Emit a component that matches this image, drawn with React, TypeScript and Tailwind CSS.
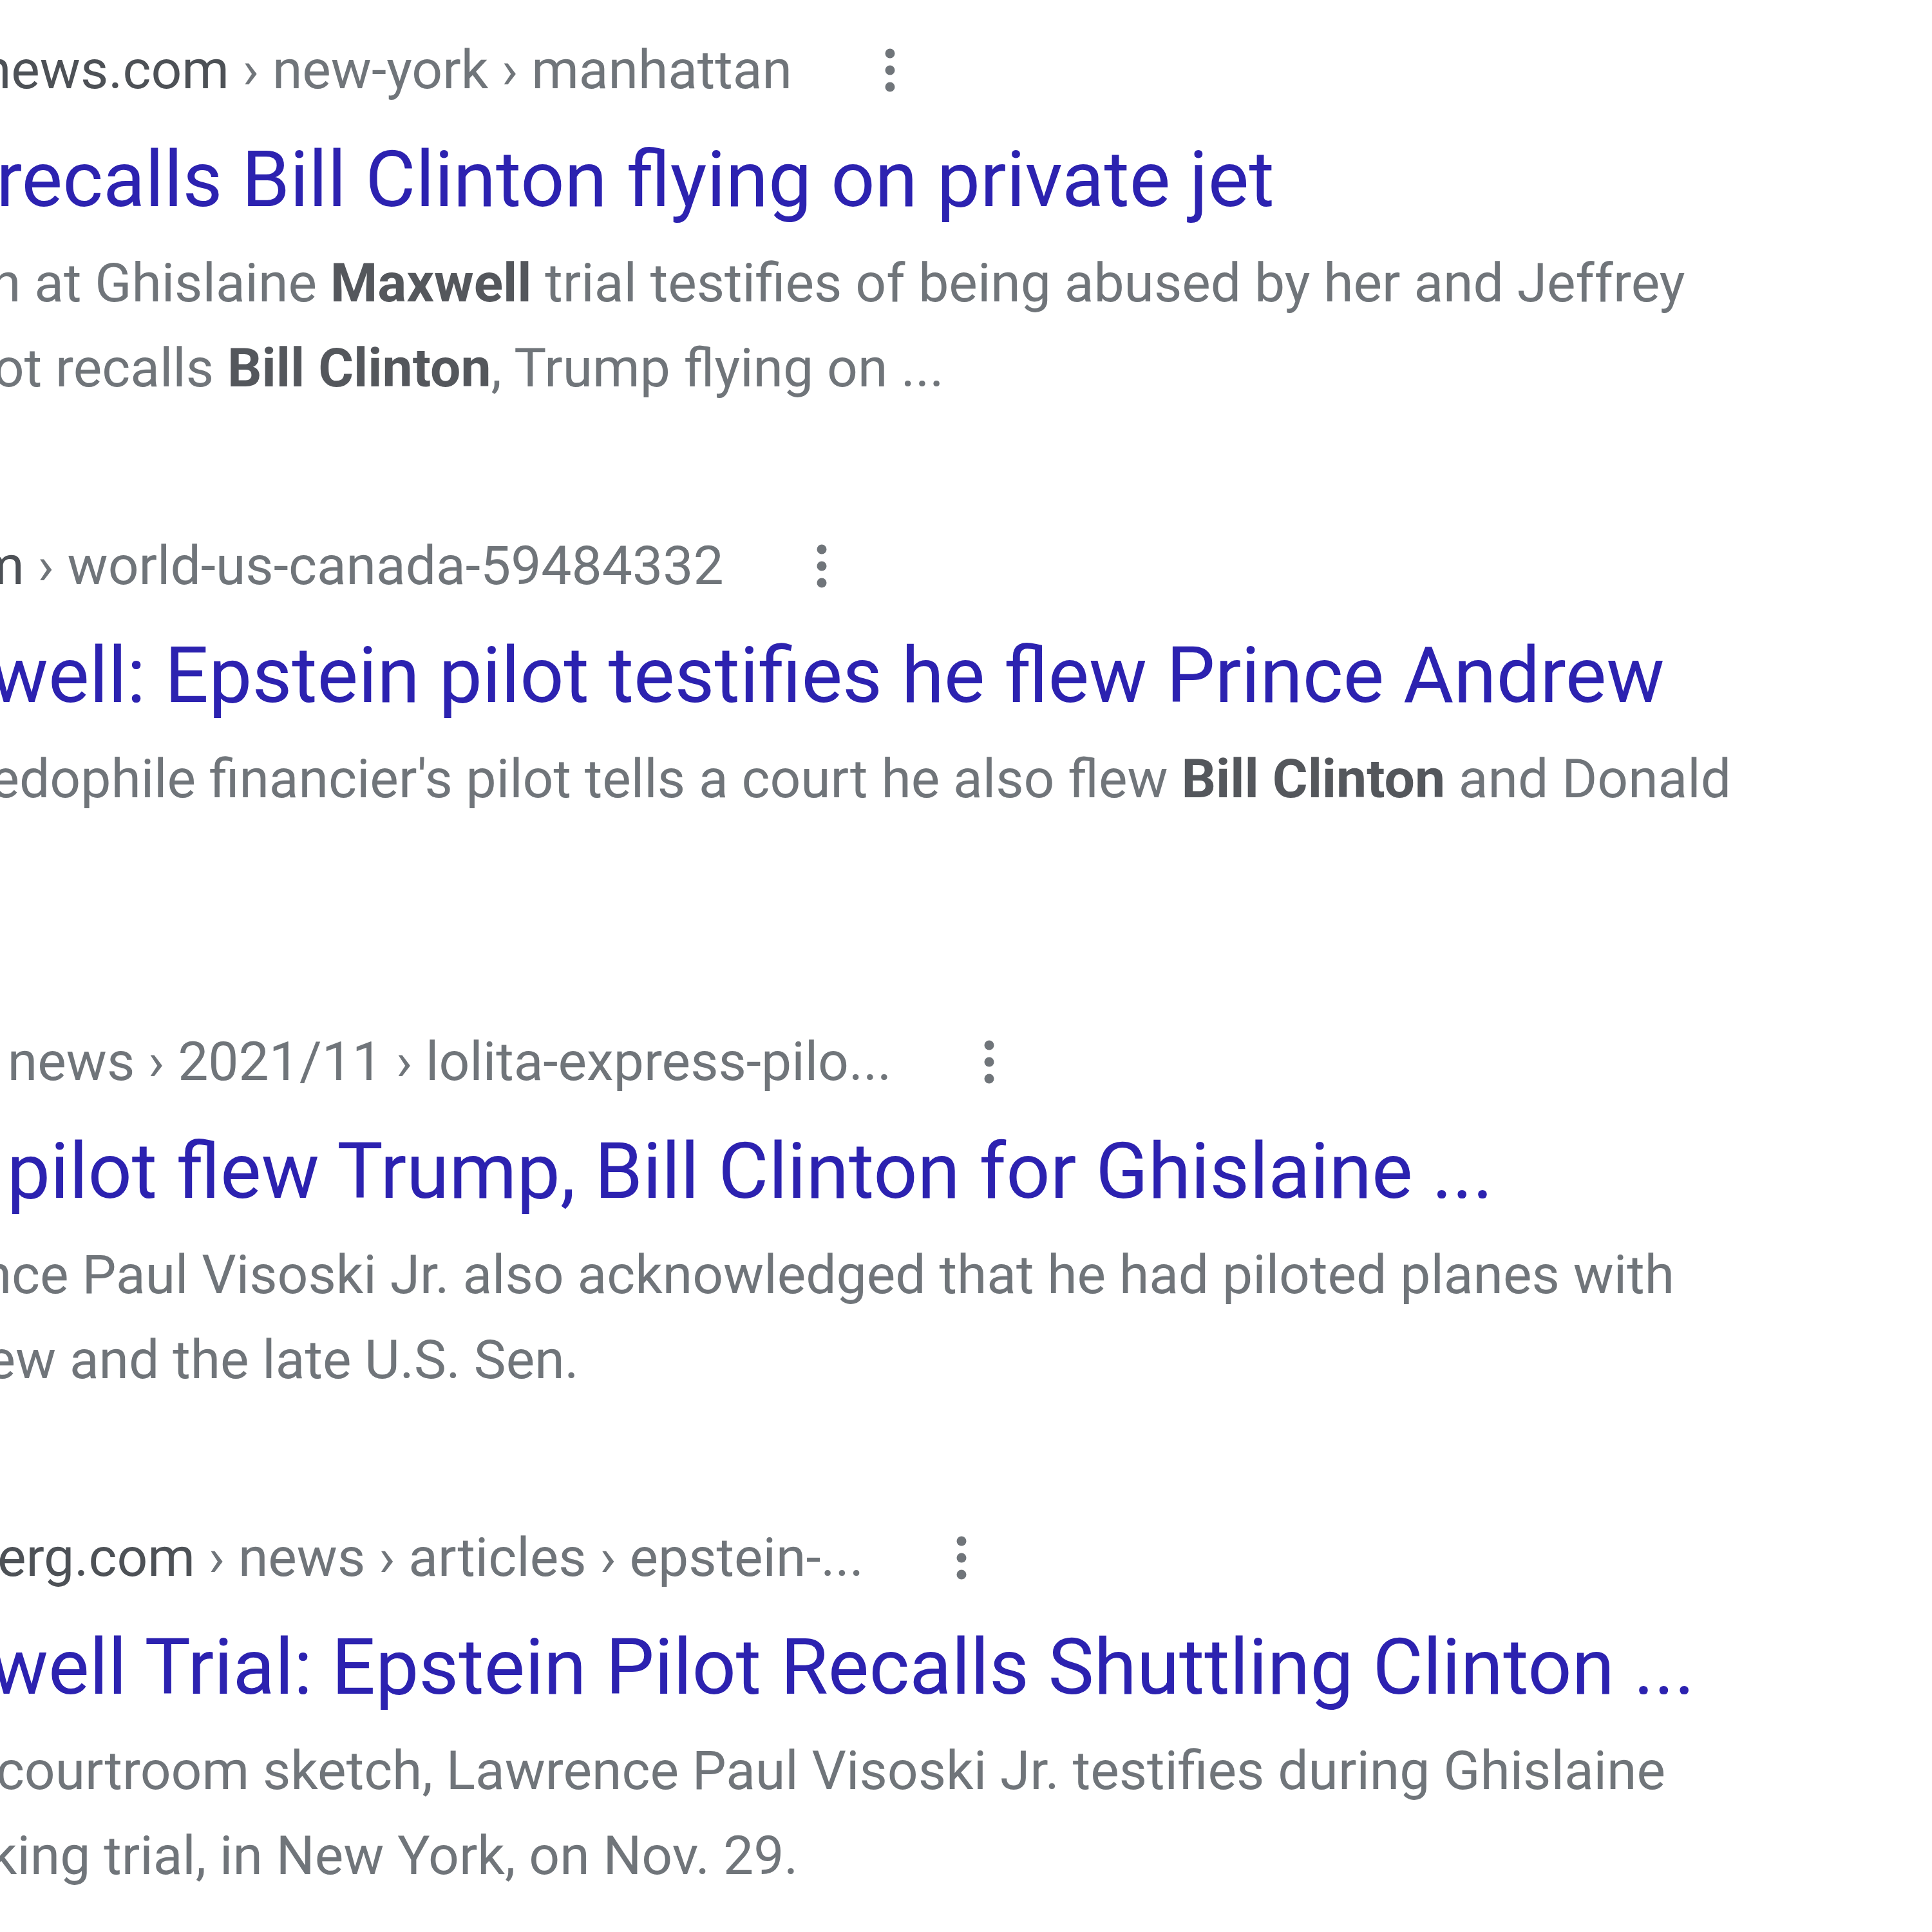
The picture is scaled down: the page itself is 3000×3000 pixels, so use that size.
import React from "react";

type Part = { t: string; b?: boolean };

type Result = {
  site: string;
  path: string;
  title: string;
  lines: Part[][];
};

const results: Result[] = [
  {
    site: "https://www.nydailynews.com",
    path: " › new-york › manhattan",
    title: "Epstein's pilot recalls Bill Clinton flying on private jet",
    lines: [
      [
        { t: "2 days ago — Woman at Ghislaine " },
        { t: "Maxwell", b: true },
        { t: " trial testifies of being abused by her and Jeffrey" },
      ],
      [
        { t: "Epstein. A former pilot recalls " },
        { t: "Bill Clinton", b: true },
        { t: ", Trump flying on ..." },
      ],
    ],
  },
  {
    site: "https://www.bbc.com",
    path: " › world-us-canada-59484332",
    title: "Ghislaine Maxwell: Epstein pilot testifies he flew Prince Andrew",
    lines: [
      [
        { t: "Dec 1, 2021 — The pedophile financier's pilot tells a court he also flew " },
        { t: "Bill Clinton", b: true },
        { t: " and Donald" },
      ],
    ],
  },
  {
    site: "https://nypost.com",
    path: " › news › 2021/11 › lolita-express-pilo...",
    title: "Lolita Express pilot flew Trump, Bill Clinton for Ghislaine ...",
    lines: [
      [{ t: "2 days ago — Lawrence Paul Visoski Jr. also acknowledged that he had piloted planes with" }],
      [{ t: "Britain's Prince Andrew and the late U.S. Sen." }],
    ],
  },
  {
    site: "https://www.bloomberg.com",
    path: " › news › articles › epstein-...",
    title: "Ghislaine Maxwell Trial: Epstein Pilot Recalls Shuttling Clinton ...",
    lines: [
      [{ t: "2 days ago — In this courtroom sketch, Lawrence Paul Visoski Jr. testifies during Ghislaine" }],
      [{ t: "Maxwell's sex trafficking trial, in New York, on Nov. 29." }],
    ],
  },
];

function Kebab() {
  return (
    <svg width="20" height="72" viewBox="0 0 20 72" className="ml-[142px] shrink-0">
      <circle cx="10" cy="10" r="7.5" fill="#70757a" />
      <circle cx="10" cy="36" r="7.5" fill="#70757a" />
      <circle cx="10" cy="62" r="7.5" fill="#70757a" />
    </svg>
  );
}

function ResultItem({ r }: { r: Result }) {
  return (
    <div className="flex flex-col">
      {/* breadcrumb */}
      <div className="flex items-center h-[132px] text-[84px] leading-[132px] whitespace-nowrap">
        <span>
          <span className="text-[#4d5156]">{r.site}</span>
          <span className="text-[#70757a]">{r.path}</span>
        </span>
        <Kebab />
      </div>
      {/* title */}
      <div className="mt-[26px] h-[156px] text-[120px] leading-[156px] text-[#2c22b0] whitespace-nowrap">
        {r.title}
      </div>
      {/* snippet */}
      <div className="mt-[17px] min-h-[264px] text-[84px] leading-[132px] text-[#70757a]">
        {r.lines.map((line, i) => (
          <div key={i} className="whitespace-nowrap">
            {line.map((p, j) =>
              p.b ? (
                <b key={j} className="font-bold text-[#54575c]">
                  {p.t}
                </b>
              ) : (
                <span key={j}>{p.t}</span>
              )
            )}
          </div>
        ))}
      </div>
    </div>
  );
}

export default function App() {
  return (
    <div className="w-[3000px] h-[3000px] overflow-hidden bg-white font-[Roboto,Arial,sans-serif]">
      <div className="ml-[-767px] pt-[43px] flex flex-col gap-[175px]">
        {results.map((r, i) => (
          <ResultItem key={i} r={r} />
        ))}
      </div>
    </div>
  );
}
